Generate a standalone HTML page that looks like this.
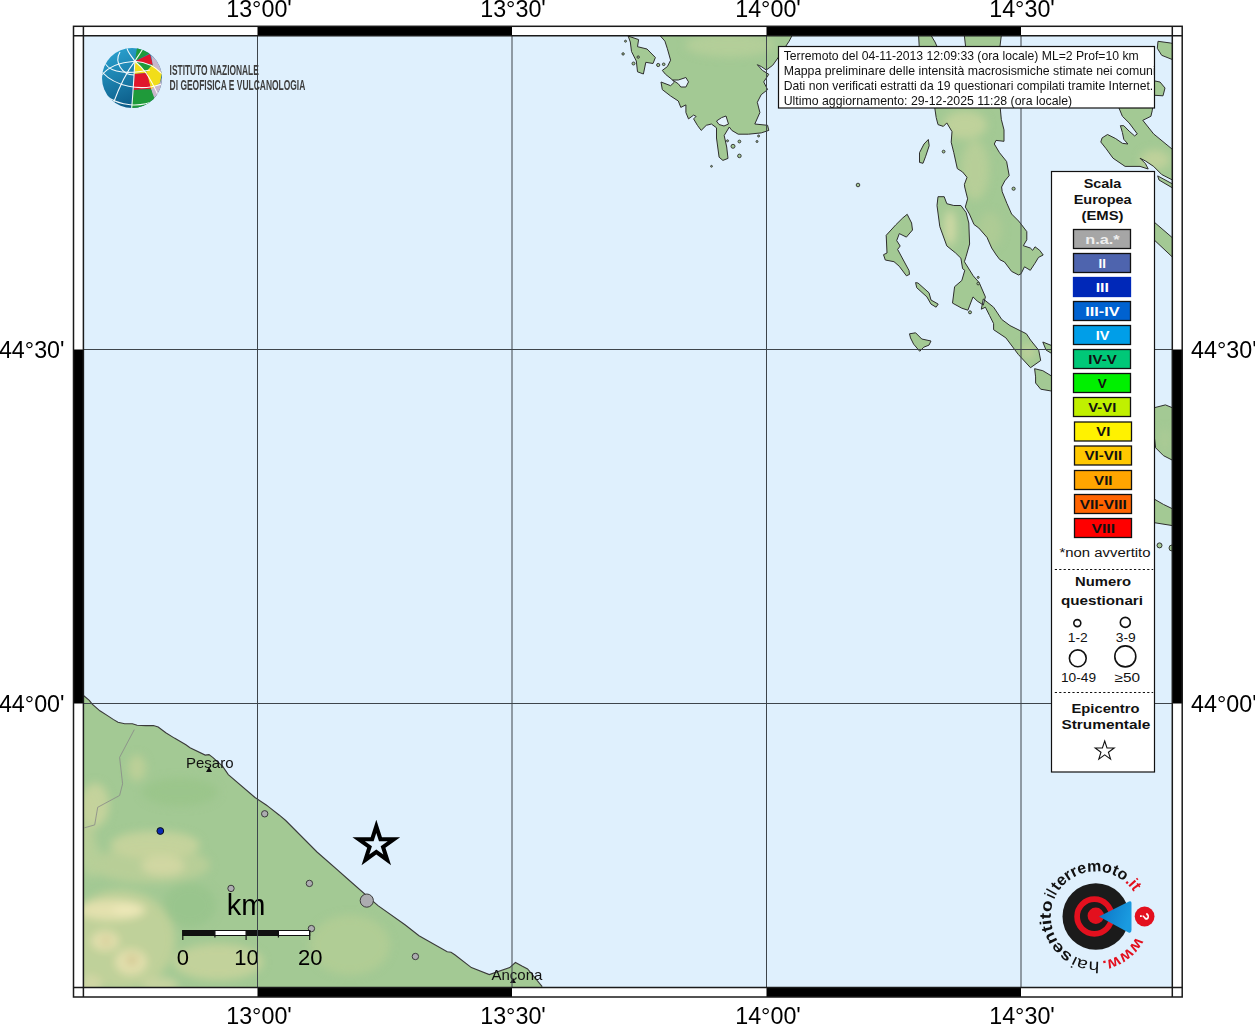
<!DOCTYPE html>
<html><head><meta charset="utf-8">
<style>
html,body{margin:0;padding:0;background:#fff;width:1255px;height:1024px;overflow:hidden}
svg{display:block}
text{font-family:"Liberation Sans",sans-serif}
</style></head><body>
<svg width="1255" height="1024" viewBox="0 0 1255 1024">
<defs>
<clipPath id="mapclip"><rect x="83.5" y="36" width="1089" height="951.5"/></clipPath>
</defs>
<rect x="0" y="0" width="1255" height="1024" fill="#fff"/>
<rect x="83.5" y="36" width="1089" height="951.5" fill="#dff0fd"/>
<g clip-path="url(#mapclip)">
<defs>
<filter id="blur6" x="-50%" y="-50%" width="200%" height="200%"><feGaussianBlur stdDeviation="4"/></filter>
<clipPath id="itclip"><path d="M83,695 L84.1,696 L89.3,700.3 L92.2,704.1 L99.9,710.8 L107.5,715.6 L113.2,719.4 L118,722.3 L124.7,723.7 L132.4,723.7 L137.1,725.2 L145.7,725.6 L153.4,725.6 L158.2,727.1 L165.8,732.8 L174.4,738.1 L185.9,744.8 L190,747.8 L205.2,755.1 L209,754.6 L213,757.6 L216.9,761.2 L222.7,766.4 L228.3,774.6 L255,797.5 L266.6,805.2 L268.1,806.4 L279.4,815.2 L285.7,820.5 L317,852 L347.7,879 L378,905.6 L405,924.7 L419,935.7 L447.2,951.7 L451,952.3 L454.8,954.8 L471.4,967.6 L489.3,974.6 L509.7,967.6 L515.4,962.5 L522.4,966.3 L527.6,968.9 L533.9,976.5 L542.2,986.7 L545,995 L78,995 L78,695 Z"/></clipPath>
<clipPath id="islclip"><path d="M660.4,30 L660.4,36 L664.9,41.1 L667.4,48.8 L670.6,60.2 L667.4,66.6 L662.3,70.4 L665.5,74.3 L671.9,79.4 L674.5,82 L670.6,85.7 L661,82 L662.3,89.6 L670.6,96 L678.3,101 L680.8,107.4 L685.9,104.9 L685.9,112.5 L688.5,118.9 L693.6,115.1 L696.1,116.4 L693.6,118.9 L697.4,125.3 L701.2,130.4 L706.3,125.3 L711.4,124 L716.5,127.8 L716.5,138 L719.1,157.2 L722.9,160.4 L728,158.4 L726.7,147 L724.2,135.5 L729.3,127 L731.8,130.4 L738.2,134.2 L748.4,134.2 L761.2,132.9 L768.8,130.4 L767.6,125.3 L754.8,124 L759.9,112.5 L757.3,102.3 L761.2,94.7 L767.6,89.6 L763.7,81.9 L768.8,74.3 L762.4,70.4 L757.3,64.7 L761.2,66.5 L766.3,70 L772.7,65.3 L779,56.4 L789.2,41.1 L791.8,36 L792,30 Z M628,36 L638.6,39.6 L637.5,46.7 L647,49 L655.4,57.5 L653,63.5 L645.8,62.3 L643.4,74 L637.5,71.8 L636.3,61 L631.5,51.5 L630.3,42 L626,30 Z M918.3,30 L927.8,30 L935,42 L938.6,50 L919.4,50 Z M963.7,30 L1002,30 L999.5,50 L966,50 Z M933.6,100 L936.2,117.6 L938,124.6 L943.3,126.4 L946.8,122.9 L952,131.6 L951.2,142.2 L953.8,152.7 L957.3,168.6 L962.6,172 L967,177.3 L964.4,184.4 L964.7,187 L967.6,198.8 L965.3,207 L969.4,214 L974,224.5 L978.8,228 L987,237.4 L991.7,248 L996.3,255 L999.9,259.7 L1004.5,262 L1011.6,271.4 L1018.6,275 L1021,273.8 L1024.5,266.8 L1030.3,270.3 L1035,263.2 L1038.5,257.4 L1043.2,255 L1039.7,250.3 L1035,246.8 L1032.7,250.3 L1030.3,248 L1023.3,245.7 L1026.8,239.8 L1026.8,231.6 L1021,224 L1018.6,221 L1011.6,214 L1006.9,203.4 L1002.2,191.7 L1001.6,187 L1004.8,180.9 L1009.2,175.6 L1006.6,161.5 L999.5,152.7 L994.3,144 L996,140.4 L1004,141.3 L1004,129.9 L1001.3,119.3 L999.5,100 Z M938,196.7 L944.2,196.7 L946.8,203.7 L953.8,205.5 L960.9,205.5 L966.1,212.5 L968.8,223 L969.6,244 L966.1,256.4 L964.4,261.7 L973.2,275.8 L979.2,282.6 L985.4,296.9 L983.3,305.1 L977.2,301 L973,296.9 L967.9,310.2 L961.8,308.2 L952.5,303.1 L954.6,286.7 L961.8,280.5 L964.8,270.3 L962.6,268.7 L960.9,258.2 L955.6,253 L946.8,245.9 L939.8,226.6 L937,205.5 Z M981.3,309.2 L985.4,307.2 L989.5,315.4 L993.6,323.6 L993.6,329.7 L1005.9,337.9 L1018.2,354.3 L1030.5,367.7 L1040.7,360.5 L1038.7,350.2 L1030.5,340 L1026.4,333.8 L1010,325.6 L1001.8,319.5 L993.6,307.2 L983.3,299 Z M907.2,214.3 L911.6,223 L912.5,230 L906.4,237.1 L899.3,233.6 L896.7,240.6 L900.2,246 L897.6,249.4 L909,270.5 L909.5,274.4 L906.4,275.8 L899.2,266.2 L894,261.7 L885.3,260 L883.5,254.7 L887,253 L886.2,235.3 L895.8,224.8 L902.9,217.8 Z M928.3,139.5 L929.2,145.7 L925.7,156.2 L923,163.3 L919.5,162.4 L919.5,152.7 L924,144 Z M915.6,282.6 L918,283 L929,292.8 L931,300 L938.2,304.1 L936.1,307.2 L931,304.1 L926.9,296.9 L916.7,287.7 Z M909.5,333.8 L915.6,332.8 L921.8,339 L931,341 L929,345.1 L923.8,347.2 L919.7,351.3 L913.6,344.1 L910.5,337.9 Z M1034.6,368.7 L1042.8,370.7 L1053,376.9 L1053,391.3 L1040.7,389.2 L1035.6,383 L1035.6,376.9 Z M1042.8,342 L1053,346.1 L1053,354.3 L1046,350 Z M1115.7,100 L1122.4,116.3 L1129.2,123 L1137.3,133.9 L1134.6,135.9 L1129.2,131.2 L1123.8,125.7 L1120.4,125.7 L1122.4,132.5 L1123.8,139.3 L1127.9,144 L1122.4,143.3 L1115.7,138.6 L1107.5,134.5 L1102.1,137.9 L1100.8,142 L1106.2,148.8 L1113,158.2 L1125.1,166.4 L1140,166.4 L1148.2,169 L1145.5,163.7 L1140,158.2 L1145.5,161 L1153.6,166.4 L1161.7,174.5 L1175,181.3 L1175,151.5 L1153.6,133.9 L1142.8,120.3 L1150.9,116.3 L1152.2,110.8 L1153.6,100 Z M1157.7,175.9 L1175,185.3 L1175,189.4 L1159,180 Z M1158,41.3 L1170.5,43 L1175,44 L1175,60.6 L1161.7,55.3 L1157.3,48.3 Z M1150,80 L1160,82 L1165,88 L1163,95.8 L1150,95 Z M1150,218.5 L1175,240 L1175,259.5 L1150,236 Z M1150,408.8 L1165.4,404.9 L1175,408.8 L1175,461.5 L1163.4,455.6 L1155.6,447.8 L1150,400 Z M1150,496.6 L1163.4,504.4 L1175,510 L1175,526 L1150,522 Z"/></clipPath>
</defs>
<g clip-path="url(#itclip)">
<rect x="78" y="690" width="470" height="310" fill="#a3c994"/>
<g filter="url(#blur6)"><ellipse cx="120" cy="940" rx="55" ry="50" fill="#c2d19a" opacity="0.9"/><ellipse cx="150" cy="865" rx="60" ry="18" fill="#c0d098" opacity="0.7"/><ellipse cx="85" cy="830" rx="10" ry="40" fill="#c0d098" opacity="0.7"/><ellipse cx="95" cy="805" rx="14" ry="22" fill="#c8d49c" opacity="0.9"/><ellipse cx="155" cy="845" rx="45" ry="14" fill="#c8d49c" opacity="0.9"/><ellipse cx="137" cy="768" rx="9" ry="13" fill="#c0d098" opacity="0.85"/><ellipse cx="180" cy="792" rx="38" ry="14" fill="#98c48a" opacity="0.8"/><ellipse cx="112" cy="910" rx="34" ry="10" fill="#e6e2b0" opacity="0.95"/><ellipse cx="127" cy="910" rx="14" ry="6" fill="#ece8b8" opacity="0.9"/><ellipse cx="105" cy="941" rx="14" ry="10" fill="#e4dfae" opacity="0.95"/><ellipse cx="131" cy="962" rx="16" ry="13" fill="#e4dfae" opacity="0.95"/><ellipse cx="106" cy="941" rx="5" ry="4" fill="#d4c892" opacity="0.9"/><ellipse cx="132" cy="960" rx="6" ry="6" fill="#d4c892" opacity="0.9"/><ellipse cx="163" cy="866" rx="22" ry="10" fill="#d4d8a4" opacity="0.9"/><ellipse cx="190" cy="905" rx="26" ry="22" fill="#98c48c" opacity="0.85"/><ellipse cx="218" cy="962" rx="45" ry="18" fill="#c8d49c" opacity="0.85"/><ellipse cx="350" cy="945" rx="40" ry="30" fill="#bcd096" opacity="0.55"/><ellipse cx="92" cy="860" rx="10" ry="18" fill="#b8d098" opacity="0.8"/><ellipse cx="90" cy="985" rx="12" ry="10" fill="#d8d8a8" opacity="0.8"/><ellipse cx="160" cy="985" rx="18" ry="8" fill="#d0d6a2" opacity="0.8"/></g>
</g>
<path d="M83,695 L84.1,696 L89.3,700.3 L92.2,704.1 L99.9,710.8 L107.5,715.6 L113.2,719.4 L118,722.3 L124.7,723.7 L132.4,723.7 L137.1,725.2 L145.7,725.6 L153.4,725.6 L158.2,727.1 L165.8,732.8 L174.4,738.1 L185.9,744.8 L190,747.8 L205.2,755.1 L209,754.6 L213,757.6 L216.9,761.2 L222.7,766.4 L228.3,774.6 L255,797.5 L266.6,805.2 L268.1,806.4 L279.4,815.2 L285.7,820.5 L317,852 L347.7,879 L378,905.6 L405,924.7 L419,935.7 L447.2,951.7 L451,952.3 L454.8,954.8 L471.4,967.6 L489.3,974.6 L509.7,967.6 L515.4,962.5 L522.4,966.3 L527.6,968.9 L533.9,976.5 L542.2,986.7" fill="none" stroke="#3a3a3a" stroke-width="1.1"/>
<path d="M134.3,729.6 L119.6,757.4 L122.6,783.8 L119.6,795.5 L97.7,807.3 L94.7,824.9 L84.5,827.8" fill="none" stroke="#888" stroke-width="0.8"/>
<path d="M660.4,30 L660.4,36 L664.9,41.1 L667.4,48.8 L670.6,60.2 L667.4,66.6 L662.3,70.4 L665.5,74.3 L671.9,79.4 L674.5,82 L670.6,85.7 L661,82 L662.3,89.6 L670.6,96 L678.3,101 L680.8,107.4 L685.9,104.9 L685.9,112.5 L688.5,118.9 L693.6,115.1 L696.1,116.4 L693.6,118.9 L697.4,125.3 L701.2,130.4 L706.3,125.3 L711.4,124 L716.5,127.8 L716.5,138 L719.1,157.2 L722.9,160.4 L728,158.4 L726.7,147 L724.2,135.5 L729.3,127 L731.8,130.4 L738.2,134.2 L748.4,134.2 L761.2,132.9 L768.8,130.4 L767.6,125.3 L754.8,124 L759.9,112.5 L757.3,102.3 L761.2,94.7 L767.6,89.6 L763.7,81.9 L768.8,74.3 L762.4,70.4 L757.3,64.7 L761.2,66.5 L766.3,70 L772.7,65.3 L779,56.4 L789.2,41.1 L791.8,36 L792,30 Z M628,36 L638.6,39.6 L637.5,46.7 L647,49 L655.4,57.5 L653,63.5 L645.8,62.3 L643.4,74 L637.5,71.8 L636.3,61 L631.5,51.5 L630.3,42 L626,30 Z M918.3,30 L927.8,30 L935,42 L938.6,50 L919.4,50 Z M963.7,30 L1002,30 L999.5,50 L966,50 Z M933.6,100 L936.2,117.6 L938,124.6 L943.3,126.4 L946.8,122.9 L952,131.6 L951.2,142.2 L953.8,152.7 L957.3,168.6 L962.6,172 L967,177.3 L964.4,184.4 L964.7,187 L967.6,198.8 L965.3,207 L969.4,214 L974,224.5 L978.8,228 L987,237.4 L991.7,248 L996.3,255 L999.9,259.7 L1004.5,262 L1011.6,271.4 L1018.6,275 L1021,273.8 L1024.5,266.8 L1030.3,270.3 L1035,263.2 L1038.5,257.4 L1043.2,255 L1039.7,250.3 L1035,246.8 L1032.7,250.3 L1030.3,248 L1023.3,245.7 L1026.8,239.8 L1026.8,231.6 L1021,224 L1018.6,221 L1011.6,214 L1006.9,203.4 L1002.2,191.7 L1001.6,187 L1004.8,180.9 L1009.2,175.6 L1006.6,161.5 L999.5,152.7 L994.3,144 L996,140.4 L1004,141.3 L1004,129.9 L1001.3,119.3 L999.5,100 Z M938,196.7 L944.2,196.7 L946.8,203.7 L953.8,205.5 L960.9,205.5 L966.1,212.5 L968.8,223 L969.6,244 L966.1,256.4 L964.4,261.7 L973.2,275.8 L979.2,282.6 L985.4,296.9 L983.3,305.1 L977.2,301 L973,296.9 L967.9,310.2 L961.8,308.2 L952.5,303.1 L954.6,286.7 L961.8,280.5 L964.8,270.3 L962.6,268.7 L960.9,258.2 L955.6,253 L946.8,245.9 L939.8,226.6 L937,205.5 Z M981.3,309.2 L985.4,307.2 L989.5,315.4 L993.6,323.6 L993.6,329.7 L1005.9,337.9 L1018.2,354.3 L1030.5,367.7 L1040.7,360.5 L1038.7,350.2 L1030.5,340 L1026.4,333.8 L1010,325.6 L1001.8,319.5 L993.6,307.2 L983.3,299 Z M907.2,214.3 L911.6,223 L912.5,230 L906.4,237.1 L899.3,233.6 L896.7,240.6 L900.2,246 L897.6,249.4 L909,270.5 L909.5,274.4 L906.4,275.8 L899.2,266.2 L894,261.7 L885.3,260 L883.5,254.7 L887,253 L886.2,235.3 L895.8,224.8 L902.9,217.8 Z M928.3,139.5 L929.2,145.7 L925.7,156.2 L923,163.3 L919.5,162.4 L919.5,152.7 L924,144 Z M915.6,282.6 L918,283 L929,292.8 L931,300 L938.2,304.1 L936.1,307.2 L931,304.1 L926.9,296.9 L916.7,287.7 Z M909.5,333.8 L915.6,332.8 L921.8,339 L931,341 L929,345.1 L923.8,347.2 L919.7,351.3 L913.6,344.1 L910.5,337.9 Z M1034.6,368.7 L1042.8,370.7 L1053,376.9 L1053,391.3 L1040.7,389.2 L1035.6,383 L1035.6,376.9 Z M1042.8,342 L1053,346.1 L1053,354.3 L1046,350 Z M1115.7,100 L1122.4,116.3 L1129.2,123 L1137.3,133.9 L1134.6,135.9 L1129.2,131.2 L1123.8,125.7 L1120.4,125.7 L1122.4,132.5 L1123.8,139.3 L1127.9,144 L1122.4,143.3 L1115.7,138.6 L1107.5,134.5 L1102.1,137.9 L1100.8,142 L1106.2,148.8 L1113,158.2 L1125.1,166.4 L1140,166.4 L1148.2,169 L1145.5,163.7 L1140,158.2 L1145.5,161 L1153.6,166.4 L1161.7,174.5 L1175,181.3 L1175,151.5 L1153.6,133.9 L1142.8,120.3 L1150.9,116.3 L1152.2,110.8 L1153.6,100 Z M1157.7,175.9 L1175,185.3 L1175,189.4 L1159,180 Z M1158,41.3 L1170.5,43 L1175,44 L1175,60.6 L1161.7,55.3 L1157.3,48.3 Z M1150,80 L1160,82 L1165,88 L1163,95.8 L1150,95 Z M1150,218.5 L1175,240 L1175,259.5 L1150,236 Z M1150,408.8 L1165.4,404.9 L1175,408.8 L1175,461.5 L1163.4,455.6 L1155.6,447.8 L1150,400 Z M1150,496.6 L1163.4,504.4 L1175,510 L1175,526 L1150,522 Z" fill="#a3c994"/>
<g clip-path="url(#islclip)"><g filter="url(#blur6)"><ellipse cx="965" cy="125" rx="22" ry="14" fill="#c2d39b" opacity="0.9"/><ellipse cx="975" cy="170" rx="14" ry="30" fill="#bcd098" opacity="0.8"/><ellipse cx="990" cy="230" rx="12" ry="18" fill="#b2cc96" opacity="0.7"/><ellipse cx="950" cy="228" rx="6" ry="18" fill="#d4daa6" opacity="0.9"/><ellipse cx="1028" cy="352" rx="8" ry="8" fill="#c2d19a" opacity="0.8"/><ellipse cx="730" cy="45" rx="45" ry="12" fill="#b8cf9a" opacity="0.8"/><ellipse cx="1155" cy="160" rx="15" ry="10" fill="#c6d39c" opacity="0.8"/><ellipse cx="1165" cy="440" rx="6" ry="12" fill="#b0cc96" opacity="0.6"/></g></g>
<path d="M660.4,30 L660.4,36 L664.9,41.1 L667.4,48.8 L670.6,60.2 L667.4,66.6 L662.3,70.4 L665.5,74.3 L671.9,79.4 L674.5,82 L670.6,85.7 L661,82 L662.3,89.6 L670.6,96 L678.3,101 L680.8,107.4 L685.9,104.9 L685.9,112.5 L688.5,118.9 L693.6,115.1 L696.1,116.4 L693.6,118.9 L697.4,125.3 L701.2,130.4 L706.3,125.3 L711.4,124 L716.5,127.8 L716.5,138 L719.1,157.2 L722.9,160.4 L728,158.4 L726.7,147 L724.2,135.5 L729.3,127 L731.8,130.4 L738.2,134.2 L748.4,134.2 L761.2,132.9 L768.8,130.4 L767.6,125.3 L754.8,124 L759.9,112.5 L757.3,102.3 L761.2,94.7 L767.6,89.6 L763.7,81.9 L768.8,74.3 L762.4,70.4 L757.3,64.7 L761.2,66.5 L766.3,70 L772.7,65.3 L779,56.4 L789.2,41.1 L791.8,36 L792,30 Z M628,36 L638.6,39.6 L637.5,46.7 L647,49 L655.4,57.5 L653,63.5 L645.8,62.3 L643.4,74 L637.5,71.8 L636.3,61 L631.5,51.5 L630.3,42 L626,30 Z M918.3,30 L927.8,30 L935,42 L938.6,50 L919.4,50 Z M963.7,30 L1002,30 L999.5,50 L966,50 Z M933.6,100 L936.2,117.6 L938,124.6 L943.3,126.4 L946.8,122.9 L952,131.6 L951.2,142.2 L953.8,152.7 L957.3,168.6 L962.6,172 L967,177.3 L964.4,184.4 L964.7,187 L967.6,198.8 L965.3,207 L969.4,214 L974,224.5 L978.8,228 L987,237.4 L991.7,248 L996.3,255 L999.9,259.7 L1004.5,262 L1011.6,271.4 L1018.6,275 L1021,273.8 L1024.5,266.8 L1030.3,270.3 L1035,263.2 L1038.5,257.4 L1043.2,255 L1039.7,250.3 L1035,246.8 L1032.7,250.3 L1030.3,248 L1023.3,245.7 L1026.8,239.8 L1026.8,231.6 L1021,224 L1018.6,221 L1011.6,214 L1006.9,203.4 L1002.2,191.7 L1001.6,187 L1004.8,180.9 L1009.2,175.6 L1006.6,161.5 L999.5,152.7 L994.3,144 L996,140.4 L1004,141.3 L1004,129.9 L1001.3,119.3 L999.5,100 Z M938,196.7 L944.2,196.7 L946.8,203.7 L953.8,205.5 L960.9,205.5 L966.1,212.5 L968.8,223 L969.6,244 L966.1,256.4 L964.4,261.7 L973.2,275.8 L979.2,282.6 L985.4,296.9 L983.3,305.1 L977.2,301 L973,296.9 L967.9,310.2 L961.8,308.2 L952.5,303.1 L954.6,286.7 L961.8,280.5 L964.8,270.3 L962.6,268.7 L960.9,258.2 L955.6,253 L946.8,245.9 L939.8,226.6 L937,205.5 Z M981.3,309.2 L985.4,307.2 L989.5,315.4 L993.6,323.6 L993.6,329.7 L1005.9,337.9 L1018.2,354.3 L1030.5,367.7 L1040.7,360.5 L1038.7,350.2 L1030.5,340 L1026.4,333.8 L1010,325.6 L1001.8,319.5 L993.6,307.2 L983.3,299 Z M907.2,214.3 L911.6,223 L912.5,230 L906.4,237.1 L899.3,233.6 L896.7,240.6 L900.2,246 L897.6,249.4 L909,270.5 L909.5,274.4 L906.4,275.8 L899.2,266.2 L894,261.7 L885.3,260 L883.5,254.7 L887,253 L886.2,235.3 L895.8,224.8 L902.9,217.8 Z M928.3,139.5 L929.2,145.7 L925.7,156.2 L923,163.3 L919.5,162.4 L919.5,152.7 L924,144 Z M915.6,282.6 L918,283 L929,292.8 L931,300 L938.2,304.1 L936.1,307.2 L931,304.1 L926.9,296.9 L916.7,287.7 Z M909.5,333.8 L915.6,332.8 L921.8,339 L931,341 L929,345.1 L923.8,347.2 L919.7,351.3 L913.6,344.1 L910.5,337.9 Z M1034.6,368.7 L1042.8,370.7 L1053,376.9 L1053,391.3 L1040.7,389.2 L1035.6,383 L1035.6,376.9 Z M1042.8,342 L1053,346.1 L1053,354.3 L1046,350 Z M1115.7,100 L1122.4,116.3 L1129.2,123 L1137.3,133.9 L1134.6,135.9 L1129.2,131.2 L1123.8,125.7 L1120.4,125.7 L1122.4,132.5 L1123.8,139.3 L1127.9,144 L1122.4,143.3 L1115.7,138.6 L1107.5,134.5 L1102.1,137.9 L1100.8,142 L1106.2,148.8 L1113,158.2 L1125.1,166.4 L1140,166.4 L1148.2,169 L1145.5,163.7 L1140,158.2 L1145.5,161 L1153.6,166.4 L1161.7,174.5 L1175,181.3 L1175,151.5 L1153.6,133.9 L1142.8,120.3 L1150.9,116.3 L1152.2,110.8 L1153.6,100 Z M1157.7,175.9 L1175,185.3 L1175,189.4 L1159,180 Z M1158,41.3 L1170.5,43 L1175,44 L1175,60.6 L1161.7,55.3 L1157.3,48.3 Z M1150,80 L1160,82 L1165,88 L1163,95.8 L1150,95 Z M1150,218.5 L1175,240 L1175,259.5 L1150,236 Z M1150,408.8 L1165.4,404.9 L1175,408.8 L1175,461.5 L1163.4,455.6 L1155.6,447.8 L1150,400 Z M1150,496.6 L1163.4,504.4 L1175,510 L1175,526 L1150,522 Z" fill="none" stroke="#2e2e2e" stroke-width="1"/>
<path d="M672.5,80 L678.3,83.8 L680.8,87 L685.9,87 L688.5,81.9 L685.9,77.5 L678.3,80 Z" fill="#e4f2fc" stroke="#2e2e2e" stroke-width="1"/><path d="M716.5,121 L721.6,117.6 L726,116 L728.5,124 L724,126 L719,124.5 Z" fill="#e4f2fc" stroke="#2e2e2e" stroke-width="1"/>
<circle cx="1159.5" cy="545.4" r="2.5" fill="#a3c994" stroke="#2e2e2e" stroke-width="1"/><circle cx="623.1" cy="53.9" r="1.2" fill="#a3c994" stroke="#2e2e2e" stroke-width="0.9"/><circle cx="625.5" cy="41.2" r="1" fill="#a3c994" stroke="#2e2e2e" stroke-width="0.9"/><circle cx="633.5" cy="63.5" r="1.5" fill="#a3c994" stroke="#2e2e2e" stroke-width="0.9"/><circle cx="638.2" cy="57.1" r="1.2" fill="#a3c994" stroke="#2e2e2e" stroke-width="0.9"/><circle cx="658.2" cy="65" r="1.6" fill="#a3c994" stroke="#2e2e2e" stroke-width="0.9"/><circle cx="663.7" cy="64.3" r="1.3" fill="#a3c994" stroke="#2e2e2e" stroke-width="0.9"/><circle cx="711.5" cy="166.3" r="0.9" fill="#a3c994" stroke="#2e2e2e" stroke-width="0.9"/><circle cx="727.5" cy="140.8" r="1" fill="#a3c994" stroke="#2e2e2e" stroke-width="0.9"/><circle cx="733" cy="146.3" r="2" fill="#a3c994" stroke="#2e2e2e" stroke-width="0.9"/><circle cx="739.4" cy="141.5" r="1.4" fill="#a3c994" stroke="#2e2e2e" stroke-width="0.9"/><circle cx="739.4" cy="155.9" r="1.8" fill="#a3c994" stroke="#2e2e2e" stroke-width="0.9"/><circle cx="757" cy="141.5" r="1" fill="#a3c994" stroke="#2e2e2e" stroke-width="0.9"/><circle cx="758.6" cy="136" r="1" fill="#a3c994" stroke="#2e2e2e" stroke-width="0.9"/><circle cx="858" cy="185" r="1.8" fill="#a3c994" stroke="#2e2e2e" stroke-width="0.9"/><circle cx="943.6" cy="151.6" r="1.4" fill="#a3c994" stroke="#2e2e2e" stroke-width="0.9"/><circle cx="1013.6" cy="188.7" r="1.6" fill="#a3c994" stroke="#2e2e2e" stroke-width="0.9"/><circle cx="970" cy="312.3" r="1.5" fill="#a3c994" stroke="#2e2e2e" stroke-width="0.9"/><circle cx="978.2" cy="277.4" r="1" fill="#a3c994" stroke="#2e2e2e" stroke-width="0.9"/><circle cx="978.2" cy="283.6" r="1.3" fill="#a3c994" stroke="#2e2e2e" stroke-width="0.9"/><circle cx="1172" cy="548" r="3" fill="#a3c994" stroke="#2e2e2e" stroke-width="0.9"/>
</g>
<!-- dots & star -->
<g stroke="#3a3a3a" stroke-width="1">
<circle cx="160.3" cy="831" r="3.4" fill="#0a2ab5" stroke="#111"/>
<circle cx="264.7" cy="813.8" r="3.2" fill="#acacb0"/>
<circle cx="309.4" cy="883.4" r="3.2" fill="#acacb0"/>
<circle cx="231" cy="888.4" r="3.2" fill="#acacb0"/>
<circle cx="311.4" cy="928.6" r="3.2" fill="#acacb0"/>
<circle cx="415.4" cy="956.5" r="3.2" fill="#acacb0"/>
<circle cx="366.8" cy="900.6" r="6.6" fill="#acacb0"/>
</g>
<path fill="#000" fill-rule="evenodd" d="M376.30,819.80 L381.94,837.13 L400.17,837.14 L385.43,847.87 L391.05,865.21 L376.30,854.50 L361.55,865.21 L367.17,847.87 L352.43,837.14 L370.66,837.13 Z M376.30,832.90 L379.00,841.18 L387.71,841.19 L380.67,846.32 L383.35,854.61 L376.30,849.50 L369.25,854.61 L371.93,846.32 L364.89,841.19 L373.60,841.18 Z"/>
<g font-size="15" fill="#111">
<text x="186" y="768.3">Pesaro</text>
<text x="491.5" y="980.1">Ancona</text>
</g>
<path d="M209,767 L206,772 L212,772 Z" fill="#111"/>
<path d="M513,978 L510,983 L516,983 Z" fill="#111"/>
<!-- scale bar -->
<rect x="182.8" y="930.5" width="126.9" height="5" fill="#fff" stroke="#111" stroke-width="1"/>
<rect x="182.8" y="930.5" width="32.1" height="5" fill="#111"/>
<rect x="246.1" y="930.5" width="32.3" height="5" fill="#111"/>
<g stroke="#111" stroke-width="1.2">
<line x1="182.8" y1="930" x2="182.8" y2="940"/>
<line x1="214.9" y1="930" x2="214.9" y2="937.5"/>
<line x1="246.1" y1="930" x2="246.1" y2="940"/>
<line x1="278.4" y1="930" x2="278.4" y2="937.5"/>
<line x1="309.7" y1="930" x2="309.7" y2="940"/>
</g>
<g font-size="22" fill="#000" text-anchor="middle">
<text x="182.8" y="964.6">0</text>
<text x="246.6" y="964.6">10</text>
<text x="310.2" y="964.6">20</text>
</g>
<text x="246" y="915" font-size="29" fill="#000" text-anchor="middle">km</text>

<!-- grid -->
<g stroke="#3e454b" stroke-width="1" fill="none">
<line x1="257.5" y1="36" x2="257.5" y2="987"/>
<line x1="512" y1="36" x2="512" y2="987"/>
<line x1="766.5" y1="36" x2="766.5" y2="987"/>
<line x1="1021" y1="36" x2="1021" y2="987"/>
<line x1="83" y1="349.5" x2="1172" y2="349.5"/>
<line x1="83" y1="703.5" x2="1172" y2="703.5"/>
</g>
<!-- frame bars -->
<g fill="#000">
<rect x="257.5" y="26.5" width="254.5" height="9.5"/>
<rect x="766.5" y="26.5" width="254.5" height="9.5"/>
<rect x="257.5" y="987.5" width="254.5" height="9.5"/>
<rect x="766.5" y="987.5" width="254.5" height="9.5"/>
<rect x="73.5" y="349.5" width="10" height="354"/>
<rect x="1172.5" y="349.5" width="10" height="354"/>
</g>
<g stroke="#1a1a1a" stroke-width="1.5" fill="none">
<rect x="73.5" y="26.3" width="1108.7" height="970.7"/>
<line x1="73.5" y1="35.8" x2="1182.2" y2="35.8"/>
<line x1="73.5" y1="987.4" x2="1182.2" y2="987.4"/>
<line x1="83.4" y1="26.3" x2="83.4" y2="997"/>
<line x1="1172.3" y1="26.3" x2="1172.3" y2="997"/>
</g>
<!-- labels -->
<g font-size="23.3" fill="#000" text-anchor="middle">
<text x="259" y="17">13°00'</text>
<text x="513" y="17">13°30'</text>
<text x="768" y="17">14°00'</text>
<text x="1022" y="17">14°30'</text>
<text x="259" y="1024">13°00'</text>
<text x="513" y="1024">13°30'</text>
<text x="768" y="1024">14°00'</text>
<text x="1022" y="1024">14°30'</text>
</g>
<g font-size="23.3" fill="#000">
<text x="64.5" y="358" text-anchor="end">44°30'</text>
<text x="64.5" y="712" text-anchor="end">44°00'</text>
<text x="1191" y="358">44°30'</text>
<text x="1191" y="712">44°00'</text>
</g>

<!-- INGV logo -->
<defs>
<linearGradient id="gblue" x1="0" y1="0" x2="0.4" y2="1">
<stop offset="0" stop-color="#2eaad8"/>
<stop offset="1" stop-color="#0b5a86"/>
</linearGradient>
<clipPath id="globe"><circle cx="132" cy="78" r="30"/></clipPath>
</defs>
<g clip-path="url(#globe)">
<rect x="100" y="46" width="64" height="64" fill="url(#gblue)"/>
<path d="M134.9,61.2 L137,48 L152,52 Z" fill="#1f9a3a"/>
<path d="M134.9,61.2 L150,54 L153,65 Z" fill="#e0162b"/>
<path d="M151,55 L163,66 L162,75 L153,66 Z" fill="#c9b7cc"/>
<path d="M134.9,61.2 L153,65 L147,73 Z" fill="#1f9a3a"/>
<path d="M134.9,61.2 L147,73 L134.6,74 Z" fill="#f1dd1a"/>
<path d="M146,72 L152,65 L162,73 L160,83 L151,90 Z" fill="#f1dd1a"/>
<path d="M134.6,74 L147,73 L151,89 L133.5,90 Z" fill="#e0162b"/>
<path d="M160,83 L163,74 L163,92 L154,102 L151,89 Z" fill="#c9b7cc"/>
<path d="M133.5,90 L151,89 L155,100 L150,110 L131,110 Z" fill="#1f9a3a"/>
<path d="M152,100 L163,90 L160,110 L150,110 Z" fill="#1f9a3a"/>
<g fill="none" stroke="#fff" stroke-width="1.1" opacity="0.95">
<path d="M134.9,61.2 C134,75 133,95 131.5,110"/>
<path d="M134.9,61.2 C128,70 120,85 113,104"/>
<path d="M134.9,61.2 C125,62 110,64 102,75"/>
<path d="M134.9,61.2 C130,54 126,50 127,47"/>
<path d="M134.9,61.2 C138,56 142,51 143,48"/>
<path d="M134.9,61.2 C142,67 148,73 159,97"/>
<path d="M134.9,61.2 C145,62 155,66 162,74"/>
<path d="M102,72 C115,86 140,92 162,84"/>
<path d="M106,96 C120,106 140,108 156,100"/>
<path d="M104,60 C106,70 120,76 150,70"/>
<path d="M120,52 C114,62 122,75 134,75"/>
</g>
</g>
<g fill="#3d3d3d" font-size="14.2" font-weight="bold">
<text x="169.6" y="75.3" textLength="89.2" lengthAdjust="spacingAndGlyphs">ISTITUTO NAZIONALE</text>
<text x="169.6" y="89.6" textLength="135.7" lengthAdjust="spacingAndGlyphs">DI GEOFISICA E VULCANOLOGIA</text>
</g>
<!-- haisentito logo -->
<circle cx="1095.8" cy="916.5" r="33.3" fill="#1b1b1b"/>
<circle cx="1094.4" cy="916.5" r="17.3" fill="none" stroke="#e3101e" stroke-width="5.7"/>
<circle cx="1095.8" cy="915.8" r="8.2" fill="#e3101e"/>
<defs><linearGradient id="tri" x1="0" y1="0" x2="1" y2="0.3"><stop offset="0" stop-color="#0a72c4"/><stop offset="1" stop-color="#1a9be0"/></linearGradient></defs>
<path d="M1099,916.5 L1129,901.5 Q1131.5,900.5 1131.5,903 L1131.5,930 Q1131.5,933.5 1128.5,932.5 Z" fill="url(#tri)"/>
<circle cx="1144.6" cy="916.5" r="9.9" fill="#e3101e"/>
<text x="1144.6" y="921.5" font-size="13" font-weight="bold" fill="#fff" text-anchor="middle" transform="rotate(90 1144.6 916.5)">?</text>
<path id="circtxt" d="M1135.90,936.93 A45,45 0 1 1 1136.25,936.23" fill="none"/>
<text font-size="16" fill="#e3101e" font-weight="bold"><textPath href="#circtxt" startOffset="0.0" textLength="43.2" lengthAdjust="spacingAndGlyphs">www.</textPath></text>
<text font-size="16" fill="#111" font-weight="normal"><textPath href="#circtxt" startOffset="45.6" textLength="25.9" lengthAdjust="spacingAndGlyphs">hai</textPath></text>
<text font-size="16" fill="#111" font-weight="bold"><textPath href="#circtxt" startOffset="73.0" textLength="62.0" lengthAdjust="spacingAndGlyphs">sentito</textPath></text>
<text font-size="16" fill="#111" font-weight="normal"><textPath href="#circtxt" startOffset="136.7" textLength="7.9" lengthAdjust="spacingAndGlyphs">il</textPath></text>
<text font-size="16" fill="#111" font-weight="bold"><textPath href="#circtxt" startOffset="146.1" textLength="74.6" lengthAdjust="spacingAndGlyphs">terremoto</textPath></text>
<text font-size="16" fill="#e3101e" font-weight="bold"><textPath href="#circtxt" startOffset="221.5" textLength="13.4" lengthAdjust="spacingAndGlyphs">.it</textPath></text>

<!-- info box -->
<rect x="778.5" y="46.5" width="376" height="61.5" fill="#fff" stroke="#111" stroke-width="1.2"/>
<svg x="779" y="47" width="375" height="61" overflow="hidden">
<g font-size="12.2" fill="#111">
<text x="4.7" y="12.6" textLength="355" lengthAdjust="spacingAndGlyphs">Terremoto del 04-11-2013 12:09:33 (ora locale) ML=2 Prof=10 km</text>
<text x="4.7" y="27.6" textLength="372" lengthAdjust="spacingAndGlyphs">Mappa preliminare delle intensità macrosismiche stimate nei comuni</text>
<text x="4.7" y="42.6" textLength="369.5" lengthAdjust="spacingAndGlyphs">Dati non verificati estratti da 19 questionari compilati tramite Internet.</text>
<text x="4.7" y="57.6" textLength="288.5" lengthAdjust="spacingAndGlyphs">Ultimo aggiornamento: 29-12-2025 11:28 (ora locale)</text>
</g>
</svg>
<!-- legend -->
<rect x="1051.5" y="171.5" width="103" height="600.5" fill="#fff" stroke="#111" stroke-width="1.2"/>
<g font-size="12.5" font-weight="bold" fill="#111" text-anchor="middle">
<text x="1102.5" y="188" textLength="37.7" lengthAdjust="spacingAndGlyphs">Scala</text>
<text x="1102.7" y="204" textLength="58" lengthAdjust="spacingAndGlyphs">Europea</text>
<text x="1102.5" y="220" textLength="42" lengthAdjust="spacingAndGlyphs">(EMS)</text>
</g>
<g stroke="#111" stroke-width="1.3">
<rect x="1073.5" y="229.5" width="57" height="19" fill="#a6a6a6"/>
<rect x="1073.5" y="253.5" width="57" height="19" fill="#4e64ae"/>
<rect x="1073.5" y="277.5" width="57" height="19" fill="#0028b8" stroke="#0028b8"/>
<rect x="1073.5" y="301.5" width="57" height="19" fill="#0062d0"/>
<rect x="1073.5" y="325.5" width="57" height="19" fill="#009ee8"/>
<rect x="1073.5" y="349.5" width="57" height="19" fill="#00c878"/>
<rect x="1073.5" y="373.5" width="57" height="19" fill="#00f000"/>
<rect x="1073.5" y="397.5" width="57" height="19" fill="#c0f000"/>
<rect x="1074.5" y="422" width="57" height="19" fill="#fff200"/>
<rect x="1074.5" y="446" width="57" height="19" fill="#ffc800"/>
<rect x="1074.5" y="470.5" width="57" height="19" fill="#ffa500"/>
<rect x="1074.5" y="494.5" width="57" height="19" fill="#ff6400"/>
<rect x="1074.5" y="518.5" width="57" height="19" fill="#ff0000"/>
</g>
<g font-size="12.6" font-weight="bold" text-anchor="middle">
<text x="1102.5" y="243.6" fill="#eee" textLength="34.4" lengthAdjust="spacingAndGlyphs">n.a.*</text>
<text x="1102.3" y="267.6" fill="#fff" textLength="7.4" lengthAdjust="spacingAndGlyphs">II</text>
<text x="1102.3" y="291.6" fill="#fff" textLength="13.3" lengthAdjust="spacingAndGlyphs">III</text>
<text x="1102.5" y="315.6" fill="#fff" textLength="34.4" lengthAdjust="spacingAndGlyphs">III-IV</text>
<text x="1102.5" y="339.6" fill="#fff" textLength="13.7" lengthAdjust="spacingAndGlyphs">IV</text>
<text x="1102.5" y="363.6" fill="#111" textLength="28.4" lengthAdjust="spacingAndGlyphs">IV-V</text>
<text x="1102.3" y="387.6" fill="#111" textLength="9" lengthAdjust="spacingAndGlyphs">V</text>
<text x="1102.3" y="411.6" fill="#111" textLength="28" lengthAdjust="spacingAndGlyphs">V-VI</text>
<text x="1103.3" y="436.1" fill="#111" textLength="14" lengthAdjust="spacingAndGlyphs">VI</text>
<text x="1103.3" y="460.1" fill="#111" textLength="37.6" lengthAdjust="spacingAndGlyphs">VI-VII</text>
<text x="1103.3" y="484.6" fill="#111" textLength="18.5" lengthAdjust="spacingAndGlyphs">VII</text>
<text x="1103.3" y="508.6" fill="#111" textLength="47" lengthAdjust="spacingAndGlyphs">VII-VIII</text>
<text x="1103.3" y="532.6" fill="#111" textLength="23.6" lengthAdjust="spacingAndGlyphs">VIII</text>
</g>
<text x="1105" y="557" font-size="12" fill="#111" text-anchor="middle" textLength="91" lengthAdjust="spacingAndGlyphs">*non avvertito</text>
<line x1="1054.8" y1="569.5" x2="1153.2" y2="569.5" stroke="#111" stroke-width="1" stroke-dasharray="2.2,2.2"/>
<g font-size="12.5" font-weight="bold" fill="#111" text-anchor="middle">
<text x="1103" y="586.3" textLength="56" lengthAdjust="spacingAndGlyphs">Numero</text>
<text x="1102" y="605" textLength="82" lengthAdjust="spacingAndGlyphs">questionari</text>
</g>
<g fill="none" stroke="#111" stroke-width="1.6">
<circle cx="1077.3" cy="623.1" r="3.5"/>
<circle cx="1125.3" cy="622.4" r="5"/>
<circle cx="1077.8" cy="658.3" r="8.4"/>
<circle cx="1125.3" cy="656.4" r="10.5"/>
</g>
<g font-size="12.5" fill="#111" text-anchor="middle">
<text x="1077.8" y="642" textLength="20" lengthAdjust="spacingAndGlyphs">1-2</text>
<text x="1125.8" y="642" textLength="20" lengthAdjust="spacingAndGlyphs">3-9</text>
<text x="1078.5" y="681.5" textLength="35" lengthAdjust="spacingAndGlyphs">10-49</text>
<text x="1127.4" y="682" textLength="25.5" lengthAdjust="spacingAndGlyphs">≥50</text>
</g>
<line x1="1054.8" y1="692.5" x2="1153.2" y2="692.5" stroke="#111" stroke-width="1" stroke-dasharray="2.2,2.2"/>
<g font-size="12.5" font-weight="bold" fill="#111" text-anchor="middle">
<text x="1105.5" y="713" textLength="68" lengthAdjust="spacingAndGlyphs">Epicentro</text>
<text x="1105.9" y="729" textLength="89" lengthAdjust="spacingAndGlyphs">Strumentale</text>
</g>
<path d="M1104.70,741.00 L1106.99,747.84 L1114.21,747.91 L1108.41,752.21 L1110.58,759.09 L1104.70,754.90 L1098.82,759.09 L1100.99,752.21 L1095.19,747.91 L1102.41,747.84 Z" fill="none" stroke="#111" stroke-width="1.1" stroke-linejoin="miter"/>

</svg>
</body></html>
